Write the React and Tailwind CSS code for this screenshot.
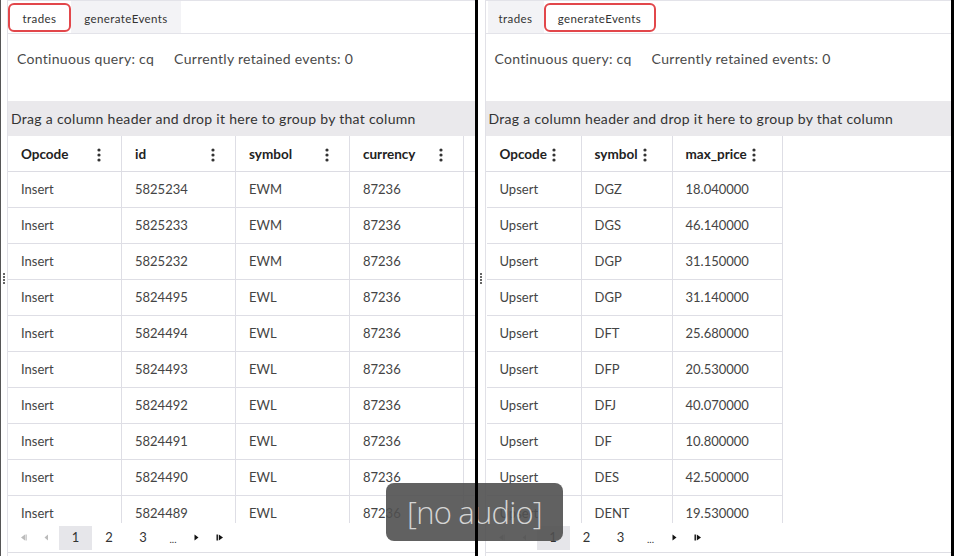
import React from 'react'

const leftRows = [
  ['Insert', '5825234', 'EWM', '87236'],
  ['Insert', '5825233', 'EWM', '87236'],
  ['Insert', '5825232', 'EWM', '87236'],
  ['Insert', '5824495', 'EWL', '87236'],
  ['Insert', '5824494', 'EWL', '87236'],
  ['Insert', '5824493', 'EWL', '87236'],
  ['Insert', '5824492', 'EWL', '87236'],
  ['Insert', '5824491', 'EWL', '87236'],
  ['Insert', '5824490', 'EWL', '87236'],
  ['Insert', '5824489', 'EWL', '87236'],
]

const rightRows = [
  ['Upsert', 'DGZ', '18.040000'],
  ['Upsert', 'DGS', '46.140000'],
  ['Upsert', 'DGP', '31.150000'],
  ['Upsert', 'DGP', '31.140000'],
  ['Upsert', 'DFT', '25.680000'],
  ['Upsert', 'DFP', '20.530000'],
  ['Upsert', 'DFJ', '40.070000'],
  ['Upsert', 'DF', '10.800000'],
  ['Upsert', 'DES', '42.500000'],
  ['Upsert', 'DENT', '19.530000'],
]

function Kebab() {
  return (
    <svg width="4" height="14" viewBox="0 0 4 14" className="shrink-0">
      <circle cx="2" cy="2" r="1.6" fill="#333" />
      <circle cx="2" cy="7" r="1.6" fill="#333" />
      <circle cx="2" cy="12" r="1.6" fill="#333" />
    </svg>
  )
}

function Grip() {
  return (
    <div className="flex flex-col gap-px items-center pt-[273px]">
      {[0, 1, 2, 3].map((i) => (
        <div key={i} className="w-[2px] h-[2px] bg-[#666]" />
      ))}
    </div>
  )
}

function Tabs({ active }) {
  const tab = (name, w) => {
    const on = name === active
    return (
      <div
        className={
          'relative h-full flex items-center justify-center pt-[3px] text-[11.5px] tracking-[0.4px] text-[#333] ' +
          w + ' ' + (on ? 'bg-white' : 'bg-[#f3f3f6]')
        }
      >
        {name}
        {on && <div className="absolute left-0 right-0 top-[2px] bottom-[1px] border-2 border-[#e2474b] rounded-[6px]" />}
      </div>
    )
  }
  return (
    <div className="h-[34px] border-t border-b border-[#e3e3e9] flex shrink-0">
      {tab('trades', active === 'trades' ? 'w-[63px]' : 'w-[56px] ml-[2px]')}
      {tab('generateEvents', active === 'trades' ? 'w-[110px]' : 'w-[112px]')}
    </div>
  )
}

function Pager() {
  return (
    <div className="h-[30px] flex items-center border-b border-[#dedee4] text-[13px] text-[#333] shrink-0">
      <svg width="7" height="7" viewBox="0 0 7 7" className="ml-[12px]">
        <path d="M5 0.5 L1 3.5 L5 6.5 Z" fill="#bbb" />
        <rect x="5.5" y="0.5" width="1.2" height="6" fill="#bbb" />
      </svg>
      <svg width="5" height="7" viewBox="0 0 5 7" className="ml-[17px]">
        <path d="M4 0.5 L0.5 3.5 L4 6.5 Z" fill="#bbb" />
      </svg>
      <div className="ml-[10px] w-[33px] h-[24px] bg-[#e6e6ea] flex items-center justify-center">1</div>
      <div className="w-[34px] text-center">2</div>
      <div className="w-[34px] text-center">3</div>
      <div className="w-[26px] text-center text-[10px] pt-[4px]">...</div>
      <svg width="5" height="7" viewBox="0 0 5 7" className="ml-[8px]">
        <path d="M0.5 0.5 L4.5 3.5 L0.5 6.5 Z" fill="#111" />
      </svg>
      <svg width="8" height="7" viewBox="0 0 8 7" className="ml-[17px]">
        <rect x="0.5" y="0.5" width="1.4" height="6" fill="#111" />
        <path d="M2.8 0.5 L7 3.5 L2.8 6.5 Z" fill="#111" />
      </svg>
    </div>
  )
}

function Panel({ active, cols, widths, rows, tight, gutter, extra, inset }) {
  const tableW = widths.reduce((a, b) => a + b, 0)
  return (
    <div className="flex h-full flex-1 min-w-0">
      <div className={gutter + ' shrink-0 flex justify-center'}>
        <Grip />
      </div>
      <div className="flex-1 min-w-0 border-l border-[#e1e1e7] flex flex-col overflow-hidden">
        <Tabs active={active} />
        <div className="h-[67px] flex items-start pt-[14px] gap-5 pl-[9px] text-[14px] tracking-[0.3px] text-[#4a4a4a] shrink-0">
          <span>Continuous query: cq</span>
          <span>Currently retained events: 0</span>
        </div>
        <div className="h-[35px] bg-[#eae9ec] flex items-center pl-[3px] text-[14px] tracking-[0.3px] text-[#333] shrink-0">
          Drag a column header and drop it here to group by that column
        </div>
        <div className={'h-[36px] flex border-b border-[#dcdce3] shrink-0 ' + inset}>
          {cols.map((c, i) => (
            <div
              key={c}
              className={
                'h-full flex items-center pl-[13px] pt-[2px] text-[13.5px] font-bold text-[#222] shrink-0 border-r border-[#dedee5] ' +
                (tight ? 'gap-[5px]' : 'justify-between pr-[20px]')
              }
              style={{ width: widths[i] }}
            >
              <span>{c}</span>
              <Kebab />
            </div>
          ))}
          {extra && <div className="w-[114px] shrink-0 border-r border-[#dedee5]" />}
        </div>
        <div className={'flex-1 min-h-0 overflow-hidden ' + inset}>
          {rows.map((r, ri) => (
            <div key={ri} className="h-[36px] flex border-b border-[#dedee5]" style={{ width: tableW + (extra ? 114 : 0) }}>
              {r.map((v, i) => (
                <div
                  key={i}
                  className="h-full flex items-center pl-[13px] text-[13px] text-[#444] shrink-0 border-r border-[#dedee5]"
                  style={{ width: widths[i] }}
                >
                  {v}
                </div>
              ))}
              {extra && <div className="w-[114px] shrink-0 border-r border-[#dedee5]" />}
            </div>
          ))}
        </div>
        <Pager />
        <div className="h-[3px] shrink-0" />
      </div>
    </div>
  )
}

export default function App() {
  return (
    <div
      className="relative w-[954px] h-[556px] flex bg-white overflow-hidden"
      style={{ fontFamily: 'Lato, "Open Sans", sans-serif' }}
    >
      <div className="w-px bg-[#555] shrink-0" />
      <Panel
        active="trades"
        cols={['Opcode', 'id', 'symbol', 'currency']}
        widths={[114, 114, 114, 114]}
        rows={leftRows}
        gutter="w-[6px]"
        inset=""
        extra
      />
      <div className="relative z-20 w-[3px] bg-black shrink-0" />
      <Panel
        active="generateEvents"
        cols={['Opcode', 'symbol', 'max_price']}
        widths={[95, 91, 110]}
        rows={rightRows}
        tight
        gutter="w-[7px]"
        inset="pl-px"
      />
      <div className="w-[3px] bg-black shrink-0" />
      <div className="absolute z-10 left-[386px] top-[483px] w-[177px] h-[58px] rounded-[8px] bg-[#505050]/90 flex items-center justify-center">
        <span className="text-[31px] font-light text-[#d4d4d4] tracking-tight" style={{ fontFamily: '"Open Sans", sans-serif' }}>
          [no audio]
        </span>
      </div>
    </div>
  )
}
